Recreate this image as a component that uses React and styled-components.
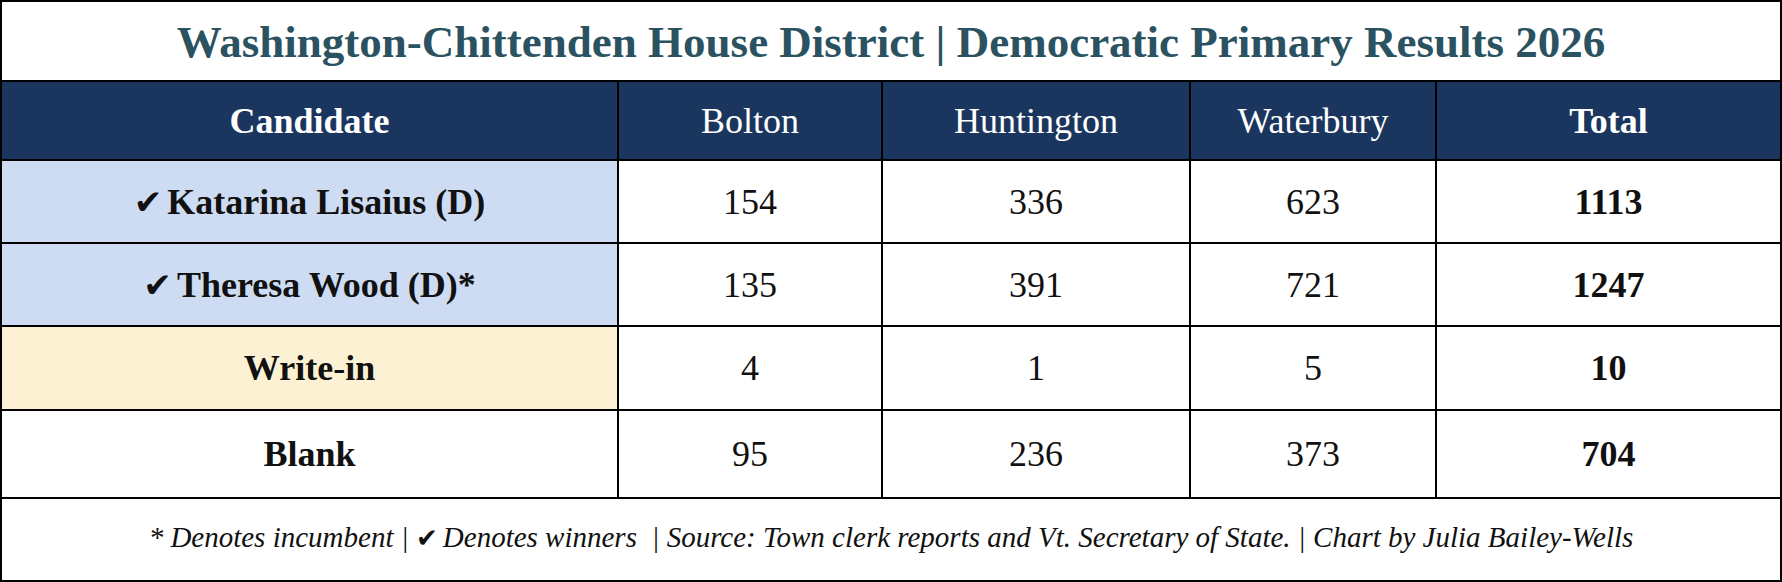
import React from "react";
import styled, { createGlobalStyle } from "styled-components";

const GlobalStyle = createGlobalStyle`
  html, body {
    margin: 0;
    padding: 0;
    background: #fff;
  }
  * {
    box-sizing: border-box;
  }
`;

const Frame = styled.div`
  width: 1782px;
  height: 582px;
  border: 2px solid #000;
  display: flex;
  flex-direction: column;
  font-family: "Liberation Serif", "DejaVu Serif", serif;
  color: #111;
  background: #fff;
`;

const Title = styled.h1`
  margin: 0;
  height: 80px;
  border-bottom: 2px solid #000;
  display: flex;
  align-items: center;
  justify-content: center;
  font-size: 45px;
  font-weight: bold;
  color: #2b5261;
  padding-top: 2px;
`;

const Table = styled.div`
  display: grid;
  grid-template-columns: 617px 264px 308px 246px 1fr;
  grid-template-rows: 79px 83px 83px 84px 88px;
`;

const HeadCell = styled.div`
  display: flex;
  align-items: center;
  justify-content: center;
  background: #1b365e;
  color: #fff;
  font-size: 36px;
  font-weight: ${(p) => (p.$bold ? "bold" : "normal")};
  border-right: ${(p) => (p.$last ? "none" : "2px solid #000")};
  border-bottom: 2px solid #000;
`;

const Cell = styled.div`
  display: flex;
  align-items: center;
  justify-content: center;
  background: ${(p) => p.$bg || "#fff"};
  font-size: 36px;
  font-weight: ${(p) => (p.$bold ? "bold" : "normal")};
  border-right: ${(p) => (p.$last ? "none" : "2px solid #000")};
  border-bottom: 2px solid #000;
`;

const Check = styled.span`
  font-family: "DejaVu Sans", sans-serif;
  font-weight: normal;
  font-style: normal;
  font-size: ${(p) => p.$size || "0.95em"};
  margin-right: ${(p) => p.$gap || "5px"};
`;

const Footer = styled.div`
  flex: 1;
  display: flex;
  align-items: center;
  justify-content: center;
  font-size: 29px;
  font-style: italic;
  color: #111;
  padding-bottom: 4px;
`;

const towns = ["Bolton", "Huntington", "Waterbury"];

const rows = [
  { name: "Katarina Lisaius (D)", winner: true, bg: "#cddcf3", votes: [154, 336, 623], total: 1113 },
  { name: "Theresa Wood (D)*", winner: true, bg: "#cddcf3", votes: [135, 391, 721], total: 1247 },
  { name: "Write-in", bg: "#fcf1d2", votes: [4, 1, 5], total: 10 },
  { name: "Blank", bg: "#fff", votes: [95, 236, 373], total: 704 },
];

export default function App() {
  return (
    <>
      <GlobalStyle />
      <Frame>
        <Title>Washington-Chittenden House District | Democratic Primary Results 2026</Title>
        <Table>
          <HeadCell $bold>Candidate</HeadCell>
          {towns.map((t) => (
            <HeadCell key={t}>{t}</HeadCell>
          ))}
          <HeadCell $bold $last>Total</HeadCell>
          {rows.map((r) => (
            <React.Fragment key={r.name}>
              <Cell $bg={r.bg} $bold>
                {r.winner && <Check>✔</Check>}
                {r.name}
              </Cell>
              {r.votes.map((v, i) => (
                <Cell key={i}>{v}</Cell>
              ))}
              <Cell $bold $last>{r.total}</Cell>
            </React.Fragment>
          ))}
        </Table>
        <Footer>
          * Denotes incumbent |&nbsp;<Check $size="0.9em" $gap="5px">✔</Check>Denotes winners &nbsp;| Source: Town clerk reports and Vt. Secretary of State. | Chart by Julia Bailey-Wells
        </Footer>
      </Frame>
    </>
  );
}
